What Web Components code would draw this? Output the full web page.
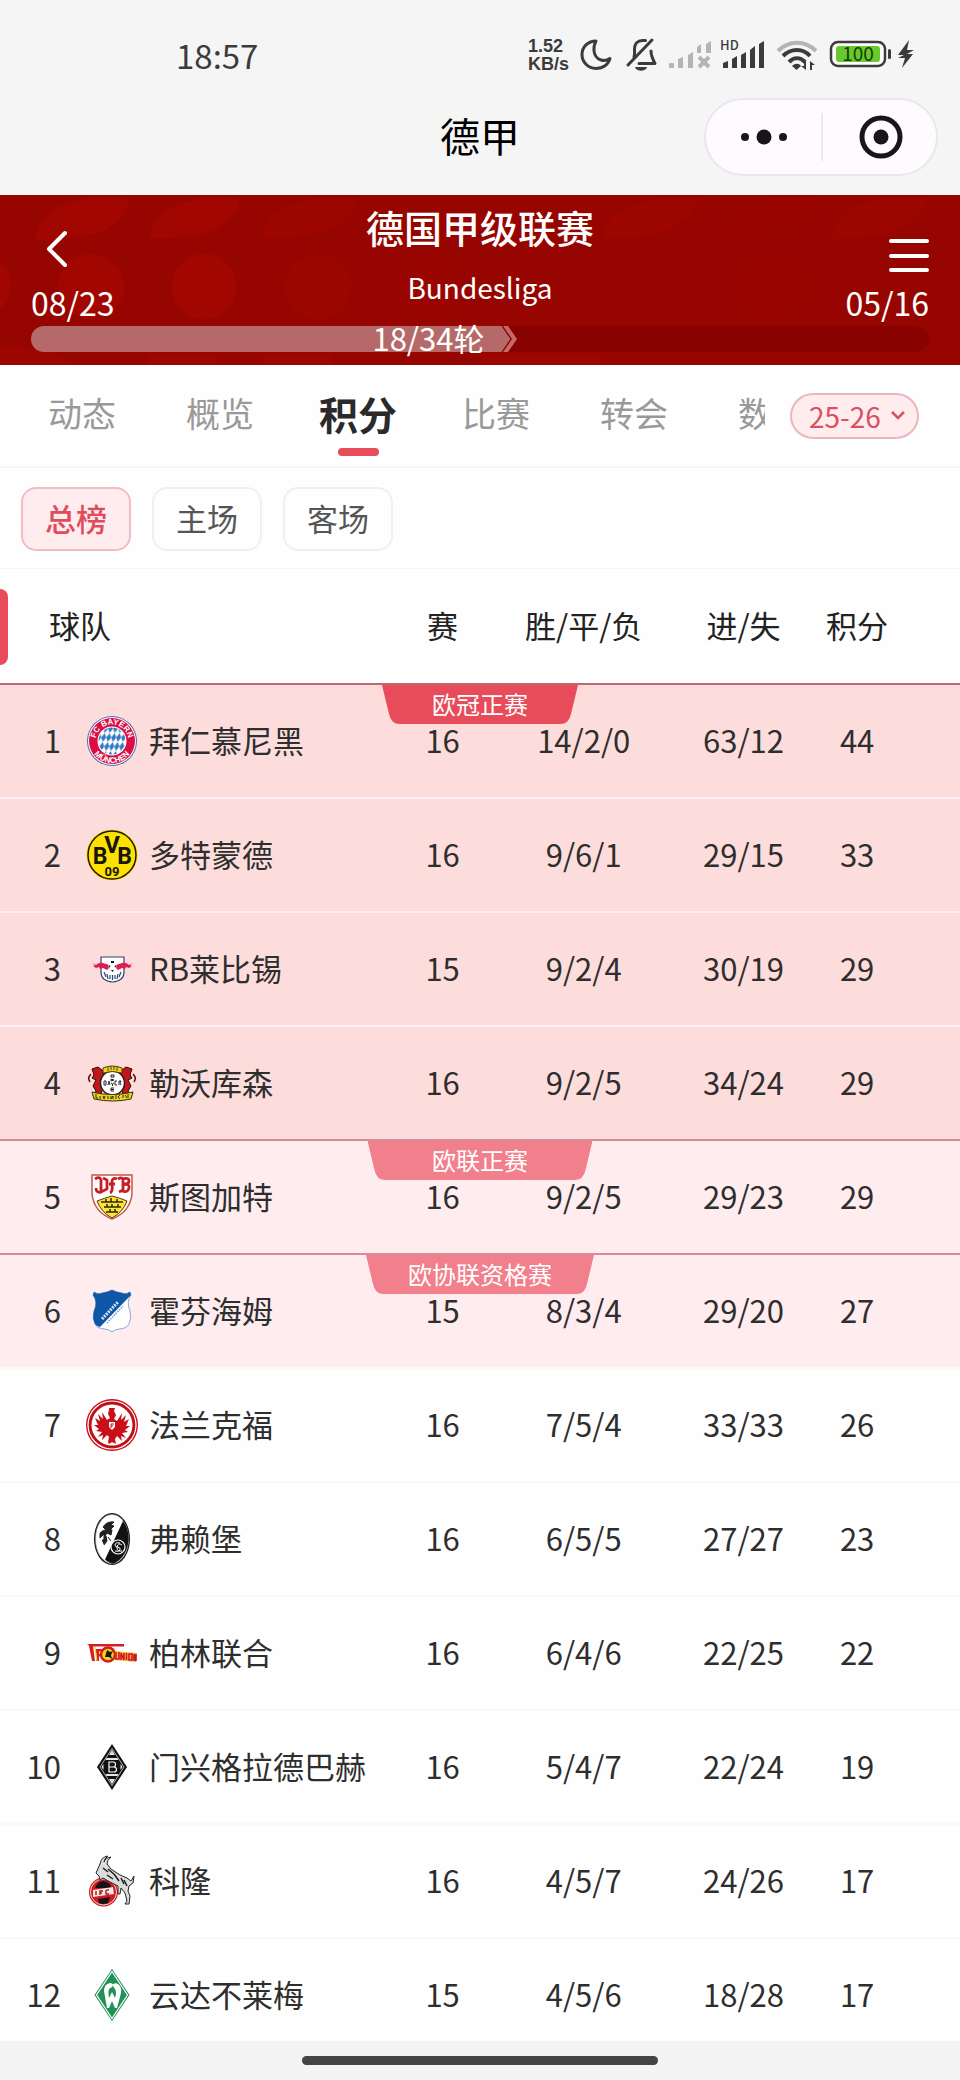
<!DOCTYPE html>
<html lang="zh-CN">
<head>
<meta charset="utf-8">
<meta name="viewport" content="width=device-width, initial-scale=1">
<title>德甲</title>
<style>
    body {
        margin: 0;
        background: #fefefe;
        color: #2e2e2e;
        font-family: 'Noto Sans CJK SC', 'Noto Sans', sans-serif;
    }
</style>
</head>
<body>

<app-shell>
    <status-bar slot="top" time="18:57"></status-bar>
    <nav-bar slot="top">德甲</nav-bar>
    <league-header slot="top" start="08/23" end="05/16" round="18" total="34">
        <span slot="name">德国甲级联赛</span>
        <span slot="latin">Bundesliga</span>
    </league-header>
    <league-tabs slot="top" active="积分"></league-tabs>
    <table-filter slot="top" active="总榜"></table-filter>
    <standings-table></standings-table>
    <home-indicator slot="bottom"></home-indicator>
</app-shell>

<script>
class AppShell extends HTMLElement {

    constructor() {
        super();
        this.shadow = this.attachShadow({ mode: 'open' });
    }

    connectedCallback() {
        this.shadow.innerHTML =
        `
        <style>
            :host {
                display: flex;
                flex-direction: column;
                height: 100vh;
            }
            main {
                flex: 1;
                min-height: 0;
                overflow: hidden;
            }
        </style>

        <slot name="top"></slot>
        <main><slot></slot></main>
        <slot name="bottom"></slot>
        `;
    }
}

class StatusBar extends HTMLElement {

    constructor() {
        super();
        this.shadow = this.attachShadow({ mode: 'open' });
    }

    connectedCallback() {
        this.shadow.innerHTML =
        `
        <style>
            :host {
                display: flex;
                justify-content: space-between;
                align-items: center;
                padding: 35px 40px 23px 176px;
                background: #f5f5f5;
                color: #3b3b3b;
            }
            time {
                font-size: 33px;
                line-height: 40px;
            }
            .icons {
                display: flex;
                align-items: center;
            }
            .speed {
                display: flex;
                flex-direction: column;
                width: 46px;
                font-family: 'Liberation Sans', sans-serif;
                font-size: 18px;
                font-weight: 700;
                line-height: 18px;
            }
            svg {
                display: block;
                height: 40px;
                fill: #3b3b3b;
            }
            .line {
                fill: none;
                stroke: #3b3b3b;
                stroke-width: 3;
                stroke-linecap: round;
                stroke-linejoin: round;
            }
            .faded { fill: #b4b4b4; }
        </style>

        <time>${this.getAttribute('time')}</time>
        <div class="icons">
            <div class="speed"><span>1.52</span><span>KB/s</span></div>
            <svg viewBox="574 36 45 40" width="45">
                <path class="line" d="M596 42c-8 0-14 6-14 13.500s6 14 14 14c7 0 12.500-4 14-10-3 2-6 2.500-9 1.500-7-2-9-11-5-19z"/>
            </svg>
            <svg viewBox="619 36 44 40" width="44">
                <path class="line" d="M634 58c1-3 .5-6 .5-8 0-5 3-8.500 8-8.500h3M651 52c0 5 1 7 4 12.500h-16M628 66l24-25"/>
                <path d="M635 68h12c-1 5-11 5-12 0z"/>
            </svg>
            <svg viewBox="663 36 53 40" width="53" class="faded">
                <rect x="669" y="64" width="5" height="5" rx="1"/>
                <path d="M678 60l5-2v11h-5zM688 56l5-3v16h-5zM697 48l4-3v9h-4zM706 45l5-3v12h-5z"/>
                <path d="M699 58l10 10M709 58l-10 10" fill="none" stroke="#b4b4b4" stroke-width="4"/>
            </svg>
            <svg viewBox="716 36 54 40" width="54">
                <text x="720" y="51" font-size="13" font-weight="500">HD</text>
                <path d="M723 64l5-2v7h-5zM732 60l5-3v12h-5zM741 56l5-3v16h-5zM750 51l5-4v22h-5zM759 45l5-3v27h-5z"/>
            </svg>
            <svg viewBox="770 36 53 40" width="53">
                <path d="M778 52c11-11 27-11 38 0" fill="none" stroke="#b4b4b4" stroke-width="4"/>
                <path d="M783 57c8-8 20-8 27 0M789 63c5-5 11-5 16 0" fill="none" stroke="#3b3b3b" stroke-width="4"/>
                <path d="M792 67c3-3 7-3 9 0l-4.500 4zM806 62v9l-5-4h3v-5zM810 71v-9l5 4h-3v5z"/>
            </svg>
            <svg viewBox="823 36 71 40" width="71">
                <rect x="831" y="43" width="54" height="24" rx="7" fill="#fff" stroke="#3b3b3b" stroke-width="2.500"/>
                <rect x="836" y="47" width="44" height="16" rx="3" fill="#68c92c"/>
                <text x="858" y="62" font-size="19" text-anchor="middle" fill="#173d05">100</text>
                <rect x="888" y="50" width="3" height="10" rx="1.500"/>
            </svg>
            <svg viewBox="894 36 26 40" width="26">
                <path d="M909 41l-11 15h6l-6 3 7 0-3 10 11-14h-6l7-4h-7z"/>
            </svg>
        </div>
        `;
    }
}

class NavBar extends HTMLElement {

    constructor() {
        super();
        this.shadow = this.attachShadow({ mode: 'open' });
    }

    connectedCallback() {
        this.shadow.innerHTML =
        `
        <style>
            :host {
                display: grid;
                grid-template-columns: 1fr auto 1fr;
                align-items: center;
                padding: 0 22px 19px;
                background: #f5f5f5;
                color: #000;
            }
            h1 {
                grid-column: 2;
                margin: 0 0 4px;
                font-size: 40px;
                font-weight: 400;
                line-height: 48px;
            }
            .capsule {
                display: flex;
                align-items: center;
                justify-self: end;
                border: 2px solid #ebe6ed;
                border-radius: 40px;
                background: #fefbff;
            }
            button {
                width: 115px;
                height: 74px;
                padding: 0;
                border: 0;
                background: none;
            }
            button + button { border-image: linear-gradient(#0000 18%, #ece8ee 18% 82%, #0000 82%) 1; border-left: 2px solid; }
            svg {
                display: inline-block;
                vertical-align: middle;
                fill: #19161a;
            }
        </style>

        <h1><slot></slot></h1>
        <div class="capsule">
            <button type="button" aria-label="更多">
                <svg width="48" height="46" viewBox="0 0 48 46">
                    <circle cx="5" cy="23" r="4"/><circle cx="24" cy="23" r="7.500"/><circle cx="43" cy="23" r="4"/>
                </svg>
            </button>
            <button type="button" aria-label="关闭">
                <svg width="46" height="46" viewBox="0 0 46 46">
                    <circle cx="24" cy="23" r="19" fill="none" stroke="#19161a" stroke-width="5"/>
                    <circle cx="24" cy="23" r="7.500"/>
                </svg>
            </button>
        </div>
        `;
    }
}

class LeagueHeader extends HTMLElement {

    constructor() {
        super();
        this.shadow = this.attachShadow({ mode: 'open' });
    }

    connectedCallback() {
        let round = this.getAttribute('round');
        let total = this.getAttribute('total');

        this.shadow.innerHTML =
        `
        <style>
            :host {
                display: block;
                position: relative;
                padding: 7px 31px 13px;
                background: #970500;
                color: #fff;
            }
            .pattern {
                position: absolute;
                inset: 0;
                width: 100%;
                height: 100%;
            }
            .top {
                position: relative;
                display: grid;
                grid-template-columns: 1fr auto 1fr;
            }
            .side {
                display: flex;
                flex-direction: column;
                justify-content: space-between;
                align-items: flex-start;
                padding-top: 28px;
                font-size: 32px;
                line-height: 48px;
            }
            .side.right { align-items: flex-end; }
            .title { text-align: center; }
            h2 {
                margin: 0;
                font-size: 38px;
                font-weight: 500;
                line-height: 50px;
            }
            p {
                margin: 15px 0 0;
                font-size: 28px;
                line-height: 40px;
            }
            button {
                padding: 0;
                border: 0;
                background: none;
            }
            svg { display: block; }
            .back { margin-left: 12px; }
            .track {
                position: relative;
                display: flex;
                height: 26px;
                border-radius: 13px;
                background: rgba(90, 0, 0, .25);
            }
            .fill {
                width: calc(100% * ${round} / ${total} + 4px);
                padding-right: 26px;
                box-sizing: border-box;
                border-radius: 13px 0 0 13px;
                background: rgba(230, 220, 220, .48);
                clip-path: polygon(0 -10px, calc(100% - 9px) -10px, calc(100% - 9px) 0, 100% 50%, calc(100% - 9px) 100%, calc(100% - 9px) 36px, 0 36px);
                font-size: 31px;
                line-height: 24px;
                text-align: right;
            }
            .arrow { margin-left: -7px; }
        </style>

        <svg class="pattern" viewBox="0 0 960 171" preserveAspectRatio="none" fill="#a20600">
            <path d="M36 46c0-24 22-38 50-42h42c0 18-18 36-50 38z"/>
            <path d="M150 44c0-24 22-34 48-40h42c-4 20-22 34-50 38z"/>
            <path d="M262 44c0-24 22-34 50-40h46c-6 18-22 30-50 38z" opacity=".5"/>
            <path d="M604 44c0-24 22-34 50-40h46c-6 18-22 30-50 38z" opacity=".5"/>
            <path d="M720 44c0-24 22-34 50-40h46c-6 18-22 30-50 38z" opacity=".3"/>
            <path d="M832 44c0-24 22-34 50-40h46c-6 18-22 30-50 38z" opacity=".5"/>
            <circle cx="-22" cy="90" r="33"/>
            <circle cx="91" cy="92" r="33"/>
            <circle cx="204" cy="92" r="33"/>
            <circle cx="318" cy="92" r="33" opacity=".6"/>
            <circle cx="430" cy="92" r="33" opacity=".3"/>
            <circle cx="660" cy="92" r="33" opacity=".2"/>
            <circle cx="772" cy="92" r="33" opacity=".3"/>
            <path d="M0 152q50 0 74 19H0zM148 160h70v11h-70zM262 160h70v11h-70zM480 160h120v11h-120z" opacity=".6"/>
        </svg>
        <div class="top">
            <div class="side">
                <button class="back" type="button" aria-label="返回">
                    <svg width="26" height="38" viewBox="0 0 26 38">
                        <path d="M22 3L6 19l16 16" fill="none" stroke="#fff" stroke-width="4" stroke-linecap="round" stroke-linejoin="round"/>
                    </svg>
                </button>
                <span>${this.getAttribute('start')}</span>
            </div>
            <div class="title">
                <h2><slot name="name"></slot></h2>
                <p><slot name="latin"></slot></p>
            </div>
            <div class="side right">
                <button type="button" aria-label="菜单">
                    <svg width="40" height="48" viewBox="0 0 40 48">
                        <path d="M2 11h36M2 26h36M2 40h36" stroke="#fff" stroke-width="4" stroke-linecap="round"/>
                    </svg>
                </button>
                <span>${this.getAttribute('end')}</span>
            </div>
        </div>
        <div class="track">
            <div class="fill">${round}/${total}轮</div>
            <svg class="arrow" width="14" height="26" viewBox="0 0 14 26">
                <path d="M0 0h5l9 13-9 13H0l9-13z" fill="#c66a68"/>
            </svg>
        </div>
        `;
    }
}

class LeagueTabs extends HTMLElement {

    constructor() {
        super();
        this.shadow = this.attachShadow({ mode: 'open' });
        this.tabs = ['动态', '概览', '积分', '比赛', '转会', '数据'];
    }

    connectedCallback() {
        let active = this.getAttribute('active');

        this.shadow.innerHTML =
        `
        <style>
            :host {
                display: flex;
                align-items: center;
                padding-right: 41px;
                border-bottom: 2px solid #f6f6f6;
            }
            nav {
                flex: 1;
                display: flex;
                min-width: 0;
                margin: 0 25px 0 13px;
                overflow: hidden;
            }
            nav button {
                flex: 0 0 138px;
                height: 101px;
                padding: 8px 0 0;
                border: 0;
                background: none;
                color: #999;
                font: 34px/80px 'Noto Sans CJK SC', sans-serif;
            }
            nav button::after {
                content: '';
                display: block;
                width: 41px;
                height: 8px;
                margin: -5px auto 18px;
                border-radius: 4px;
            }
            nav button.active {
                color: #2a2a2a;
                font-size: 39px;
                font-weight: 700;
            }
            nav button.active::after { background: #e84b5a; }
            .season {
                display: grid;
                align-items: center;
            }
            .season > * { grid-area: 1 / 1; }
            select {
                appearance: none;
                width: 129px;
                height: 46px;
                padding: 0 0 0 17px;
                border: 2px solid #e6b9c0;
                border-radius: 23px;
                background: #ffecee;
                color: #d9505f;
                font: 28px 'Noto Sans CJK SC', sans-serif;
            }
            svg {
                justify-self: end;
                margin-right: 13px;
                pointer-events: none;
            }
        </style>

        <nav>
            ${this.tabs.map(tab => `<button type="button" class="${tab === active ? 'active' : ''}">${tab}</button>`).join('')}
        </nav>
        <label class="season">
            <select aria-label="赛季">
                <option>25-26</option>
            </select>
            <svg width="16" height="12" viewBox="0 0 16 12">
                <path d="M2 2l6 6 6-6" fill="none" stroke="#d9505f" stroke-width="2.500"/>
            </svg>
        </label>
        `;
    }
}

class TableFilter extends HTMLElement {

    constructor() {
        super();
        this.shadow = this.attachShadow({ mode: 'open' });
    }

    connectedCallback() {
        this.render();

        this.shadow.addEventListener('click', (event => {
            let button = event.target.closest('button');

            if (button) {
                this.setAttribute('active', button.textContent);
                this.render();
            }
        }));
    }

    render() {
        let active = this.getAttribute('active');

        this.shadow.innerHTML =
        `
        <style>
            :host {
                display: flex;
                gap: 21px;
                padding: 19px 21px 17px;
                border-bottom: 1px solid #f6f6f6;
            }
            button {
                width: 110px;
                height: 64px;
                padding: 0 0 2px;
                border: 2px solid #f0f0f0;
                border-radius: 15px;
                background: none;
                color: #555;
                font: 31px/56px 'Noto Sans CJK SC', sans-serif;
            }
            button.active {
                border-color: #f2bcc4;
                background: #ffecee;
                color: #e04c5c;
                font-weight: 500;
            }
        </style>

        ${['总榜', '主场', '客场'].map(name => `<button type="button" class="${name === active ? 'active' : ''}">${name}</button>`).join('')}
        `;
    }
}

class ZoneFlag extends HTMLElement {

    constructor() {
        super();
        this.shadow = this.attachShadow({ mode: 'open' });
    }

    connectedCallback() {
        let width = Number(this.getAttribute('width'));

        this.shadow.innerHTML =
        `
        <style>
            :host {
                display: grid;
                width: ${width}px;
                color: #fff;
                font-size: 24px;
                line-height: 38px;
                text-align: center;
            }
            svg, span { grid-area: 1 / 1; }
        </style>

        <svg width="${width}" height="39" viewBox="0 0 ${width} 39">
            <path d="M0 0H${width}l-7 29q-2 10-11 10H18q-9 0-11-10z" fill="${this.getAttribute('color')}"/>
        </svg>
        <span><slot></slot></span>
        `;
    }
}

const CRESTS = {
    bayern: `
        <defs>
            <pattern id="rauten" width="5" height="9" patternUnits="userSpaceOnUse" patternTransform="skewX(-12)">
                <path d="M2.500 0L5 4.500 2.500 9 0 4.500z" fill="#2f7ac6"/>
            </pattern>
            <path id="over" d="M9.500 26a16.500 16.500 0 0 1 33 0"/>
            <path id="under" d="M4 26a22 22 0 0 0 44 0"/>
        </defs>
        <circle cx="26" cy="26" r="25" fill="#4b6db8"/>
        <circle cx="26" cy="26" r="24" fill="#fff"/>
        <circle cx="26" cy="26" r="23" fill="#dc0d45"/>
        <circle cx="26" cy="26" r="14.500" fill="#fff"/>
        <circle cx="26" cy="26" r="13.500" fill="url(#rauten)"/>
        <g fill="#fff" font-family="Liberation Sans" font-size="8" font-weight="700" text-anchor="middle">
            <text><textPath href="#over" startOffset="50%">FC BAYERN</textPath></text>
            <text><textPath href="#under" startOffset="50%">MÜNCHEN</textPath></text>
        </g>`,
    dortmund: `
        <circle cx="26" cy="26" r="25.500" fill="#fde100"/>
        <circle cx="26" cy="26" r="24" fill="none" stroke="#1d1a08" stroke-width="1.500"/>
        <g fill="#17140a" font-family="Roboto" font-weight="700" text-anchor="middle">
            <text x="14" y="35" font-size="23">B</text>
            <text x="26" y="24" font-size="24">V</text>
            <text x="38.500" y="35" font-size="23">B</text>
            <text x="26" y="47" font-size="13">09</text>
        </g>`,
    leipzig: `
        <path d="M15 14h23v15q0 9-11.500 10Q15 38 15 29z" fill="#fff" stroke="#34406e" stroke-width="1.200"/>
        <path d="M6 20l4 2q3-3 7-2l6 2 1 2-3 3-4-2-3 1-1-2-3 1-3-2 2-.5zM47 20l-4 2q-3-3-7-2l-6 2-1 2 3 3 4-2 3 1 1-2 3 1 3-2-2-.5z" fill="#dd1c50"/>
        <circle cx="26.500" cy="23" r="4" fill="#fff"/>
        <path d="M25 18h3v2h-3zM22.500 22l2 1-1 2zM30.500 22l-2 1 1 2zM25 27h3l-1.500 2z" fill="#171b33"/>
        <path d="M18 29l2 5M21 31l1 5M24 32v4M26.500 32v5M29 32v4M32 31l-1 5M35 29l-2 5" stroke="#34406e" stroke-width="1.200"/>`,
    leverkusen: `
        <path d="M6 12l6-2 4 3 2 5-3 5 3 5-3 9-8 2 3-5-3-5 3-6-4-2 2-3zM46 12l-6-2-4 3-2 5 3 5-3 5 3 9 8 2-3-5 3-5-3-6 4-2-2-3z" fill="#c3151c" stroke="#31090b"/>
        <path d="M5 17q-4 4-1 8M47 17q4 4 1 8" fill="none" stroke="#5b1010" stroke-width="1.500"/>
        <circle cx="26.500" cy="26" r="12" fill="#fff" stroke="#24201c" stroke-width="1.500"/>
        <path d="M17 11q9-4 19 0v5q-10-3-19 0z" fill="#f2d227" stroke="#4f3d0b"/>
        <path d="M22 10v4M25 9v4M28 9v4M31 10v4" stroke="#5b470e"/>
        <path d="M18 24v4M18 24h2v4h-2M22 28l1-4 1 4M29 24v4M29 24h2M29 28h2M33 24v4M33 24h2l-1 2 1 2M25 18h3v2h-3zM25 22l3 1-3 1zM25 26l1.500 1 1.500-1M26.500 27v2M28 31h-3v3h3M25 32.500h3" fill="none" stroke="#252525"/>
        <path d="M6 35q20 5 41 0l-2 7q-18 4-37 0z" fill="#ecd128" stroke="#35310b"/>
        <path d="M10 37v4h2M14 39v3M17 39l1 3 1-3M22 39v3M25 39v3l2-3v3M30 38v4M32 40l2-2M32 40l2 2M37 38v3M39 38l2 3M42 37v4" fill="none" stroke="#37320b"/>`,
    stuttgart: `
        <path d="M6 4h40v19q-2 18-20 25Q8 41 6 23z" fill="#fff" stroke="#bd5a45" stroke-width="1.500"/>
        <path d="M11 30q8-3 15-5 8 2 15 5-4 11-15 17-11-6-15-17z" fill="#fde533" stroke="#5a2e10"/>
        <path d="M9 8q5-3 6 1v12l6-3V9l-4-2M15 21q-5 1-5-4M24 22q3-2 2-8V10q1-4 5-2M23 13h6M32 8q5-3 5 2v9l-4 2M36 8q7-2 7 2 0 3-5 3 6 0 5 4-1 5-7 3" fill="none" stroke="#c91d24" stroke-width="2.800"/>
        <path d="M15 31h22M18 36h17M20 41h12M20 28v3M25 27v4M31 28v3M21 33v3M26 33v3M32 33v3M24 38v3M29 38v3" stroke="#2e250b" stroke-width="1.500"/>`,
    hoffenheim: `
        <path d="M8 7q4 3 8 1 6-1 10-3 4 2 10 3 4 2 8-1l1 3q-5 7-1 16 2 7-1 13-3 5-10 5-5 1-7 3-2-2-7-3-7 0-10-5-3-6-1-13 4-9-1-16z" fill="#fff" stroke="#8aa9ca"/>
        <path d="M8 7q4 3 8 1 6-1 10-3 4 2 10 3 4 2 8-1l1 3L14 42q-4-1-5-3-3-6-1-13 4-9-1-16z" fill="#0d57a6"/>
        <path d="M16 34l16-17" stroke="#d5e3f1" stroke-width="3" stroke-dasharray="2 1"/>
        <path d="M21 38l16-17" stroke="#7d9fc5" stroke-width="1.500" stroke-dasharray="1.500 1"/>`,
    frankfurt: `
        <circle cx="26" cy="26" r="26" fill="#c30f18"/>
        <circle cx="26" cy="26" r="24" fill="none" stroke="#fff" stroke-width="1.200"/>
        <circle cx="26" cy="26" r="20.500" fill="#fff"/>
        <path d="M23 9h6l-1 3 2 4-2 4 3 2 5-8-1 7 5-5-2 7 5-3-3 7 4 0-5 4 3 2-6 1 4 5-5-2 1 5-5-5-2 3 1 5-4-2-3 2-1-2 1-5-2-2-5 5 1-5-5 2 4-5-6-1 3-2-5-4h4l-3-7 5 3-2-7 5 5-1-7 5 8 3-2-2-4 1-4z" fill="#c90f19"/>
        <path d="M23 23h6v5l-3 3-3-3z" fill="#fff"/>
        <path d="M25 29v-4h3M25 27h2" fill="none" stroke="#c90f19"/>`,
    freiburg: `
        <ellipse cx="26" cy="26" rx="18" ry="26" fill="#171717"/>
        <ellipse cx="26" cy="26" rx="16.500" ry="24.500" fill="#fff" stroke="#999" stroke-width=".6"/>
        <path d="M37 8Q43 16 42.500 27 41 44 28 50.500q-5 0-9-4z" fill="#111"/>
        <path d="M17 14q4-6 11-5l-3 3 3 1-4 4-5-1zM14 20q5-5 12-3l-1 5-4-2-3 5 0-4-4 4zM16 28l4-5 1 5-3 4M22 24l3 4" fill="#222" stroke="#222"/>
        <circle cx="32" cy="34" r="7" fill="#111" stroke="#fff" stroke-width="1.200"/>
        <path d="M34 30q-5-1-5 2 0 2 3 2 3 1 2 3-1 2-5 1M36 32q-4-3-5 2 0 5 5 4" fill="none" stroke="#fff"/>`,
    union: `
        <path d="M1 17h37v2.500H4z" fill="#d6201f"/>
        <path d="M3 19l3 15h3L7 19zM10 22h8v2.500h-5V27h4v2.500h-4V34h-3z" fill="#d6201f"/>
        <path d="M9 20l2 14M13 26h4" stroke="#f4cf1b" stroke-width="1.200"/>
        <circle cx="22" cy="27.500" r="7" fill="#f4d322" stroke="#cf1c1c" stroke-width="2.500"/>
        <path d="M19 30l2-7 3 2 3-1-2 4 1 4-3-2z" fill="#1c190b"/>
        <path d="M29 24l22 2-1 9-21-2z" fill="#f3c22a"/>
        <path d="M30 25v7h3v-7M35 33v-7l3 7v-7M40.500 26v7M43 27h3v6h-3zM48 34v-7l2 7v-7" fill="none" stroke="#cf1233" stroke-width="1.600"/>`,
    gladbach: `
        <path d="M26 3l15 23-15 23L11 26z" fill="#111"/>
        <path d="M26 7.500l12 18.500-12 18.500L14 26z" fill="none" stroke="#ddd" stroke-width=".8"/>
        <path d="M23 14h6l-3-5zM20.500 17h11l1 2h-13zM23 38h6l-3 5zM20.500 35h11l1-2h-13zM15.500 26l2-3v6zM36.500 26l-2-3v6z" fill="#e7e7e7"/>
        <path d="M23 21h4.500q2 0 2 2.500T27.500 26H23zM23 26h5q2.500 0 2.500 2.500T28 31h-5z" fill="none" stroke="#fff" stroke-width="1.200"/>`,
    koeln: `
        <circle cx="17.500" cy="37" r="14.500" fill="#cf1b20"/>
        <circle cx="17.500" cy="37" r="13" fill="none" stroke="#fff" stroke-width=".8"/>
        <path d="M11 29q6-6 13 0l1 4H9zM12 44l12-2-2 6q-5 2-9 0z" fill="#171313"/>
        <path d="M7 35l20-3 1 7-21 3z" fill="#f6e6e6"/>
        <path d="M10 36v4M14 40v-4h3M14 38h2M23 35q-4-1-3 4h3" fill="none" stroke="#a81519" stroke-width="1.400"/>
        <path d="M14 9q1-7 8-8-4 3-4 6 1-4 7-5-4 3-4 7l4 5 9 6 7 3 4 3 3-5-1 7-4 3-1 5 2 5-1 8h-4l2-3-2-8-4-5-1 6h-2v-8l-8-4-7-4-3 2-1-4-3-3z" fill="#dcdcdc" stroke="#222"/>
        <path d="M17 13l5 4M22 14l7 6M21 20l6 4M28 19l5 7M35 23l3 6M38 25l3 6" stroke="#1d1d1d" stroke-width="1.500"/>`,
    bremen: `
        <path d="M26 0l17.500 26L26 52 8.500 26z" fill="#219257"/>
        <path d="M26 2.500L41.500 26 26 49.500 10.500 26z" fill="none" stroke="#fff" stroke-width="1.200"/>
        <path d="M18 22q0-7 6-8 4 0 2 4l-3 2q-1 3 0 9l3-6 3 6q2-6 0-9l-3-4q3-3 6-1 4 3 3 9l-4 15h-2l-3-7-3 7h-2z" fill="#fff"/>`
};

class ClubCrest extends HTMLElement {

    constructor() {
        super();
        this.shadow = this.attachShadow({ mode: 'open' });
    }

    connectedCallback() {
        this.shadow.innerHTML =
        `
        <style>
            :host { display: block; }
            svg {
                display: block;
                width: 52px;
                height: 52px;
            }
        </style>

        <svg viewBox="0 0 52 52" aria-hidden="true">${CRESTS[this.getAttribute('club')]}</svg>
        `;
    }
}

class StandingsTable extends HTMLElement {

    constructor() {
        super();
        this.shadow = this.attachShadow({ mode: 'open' });
        this.teams = [
            { club: 'bayern', name: '拜仁慕尼黑', played: 16, record: '14/2/0', goals: '63/12', points: 44, zone: 'ucl' },
            { club: 'dortmund', name: '多特蒙德', played: 16, record: '9/6/1', goals: '29/15', points: 33, zone: 'ucl' },
            { club: 'leipzig', name: 'RB莱比锡', played: 15, record: '9/2/4', goals: '30/19', points: 29, zone: 'ucl' },
            { club: 'leverkusen', name: '勒沃库森', played: 16, record: '9/2/5', goals: '34/24', points: 29, zone: 'ucl' },
            { club: 'stuttgart', name: '斯图加特', played: 16, record: '9/2/5', goals: '29/23', points: 29, zone: 'uel' },
            { club: 'hoffenheim', name: '霍芬海姆', played: 15, record: '8/3/4', goals: '29/20', points: 27, zone: 'uecl' },
            { club: 'frankfurt', name: '法兰克福', played: 16, record: '7/5/4', goals: '33/33', points: 26 },
            { club: 'freiburg', name: '弗赖堡', played: 16, record: '6/5/5', goals: '27/27', points: 23 },
            { club: 'union', name: '柏林联合', played: 16, record: '6/4/6', goals: '22/25', points: 22 },
            { club: 'gladbach', name: '门兴格拉德巴赫', played: 16, record: '5/4/7', goals: '22/24', points: 19 },
            { club: 'koeln', name: '科隆', played: 16, record: '4/5/7', goals: '24/26', points: 17 },
            { club: 'bremen', name: '云达不莱梅', played: 15, record: '4/5/6', goals: '18/28', points: 17 }
        ];
        this.zones = {
            ucl: { label: '欧冠正赛', width: 196, color: '#e84b5a' },
            uel: { label: '欧联正赛', width: 225, color: '#f1808c' },
            uecl: { label: '欧协联资格赛', width: 228, color: '#f1808c' }
        };
    }

    connectedCallback() {
        this.render();
    }

    // The flag hangs from the first row of each zone
    row(team, index) {
        let previous = this.teams[index - 1];
        let first = team.zone && (!previous || previous.zone !== team.zone);
        let zone = this.zones[team.zone];
        let flag = first ? `<zone-flag width="${zone.width}" color="${zone.color}">${zone.label}</zone-flag>` : '';

        return `
            <tr class="${team.zone || ''} ${first ? 'first' : ''}">
                <td class="rank">${index + 1}</td>
                <td class="crest"><club-crest club="${team.club}"></club-crest></td>
                <td class="name">${team.name}${flag}</td>
                <td>${team.played}</td>
                <td>${team.record}</td>
                <td>${team.goals}</td>
                <td class="points">${team.points}</td>
            </tr>
        `;
    }

    render() {
        this.shadow.innerHTML =
        `
        <style>
            :host { display: block; }
            table {
                width: 100%;
                table-layout: fixed;
                border-collapse: separate;
                border-spacing: 0;
                font-size: 31px;
                line-height: 44px;
            }
            tr { position: relative; }
            th, td {
                box-sizing: border-box;
                height: 114px;
                padding: 0 0 3px;
                font-weight: 400;
                text-align: center;
                white-space: nowrap;
            }
            td { border-top: 2px solid #f9f9f9; }
            th { color: #222; }
            .team {
                padding-left: 49px;
                text-align: left;
            }
            .team::before {
                content: '';
                position: absolute;
                left: 0;
                top: 20px;
                width: 8px;
                height: 76px;
                border-radius: 0 8px 8px 0;
                background: #e84b5a;
            }
            .rank { text-align: right; }
            .crest { padding: 0 0 0 25px; }
            .name { text-align: left; }
            .points { padding-right: 58px; }
            .ucl td {
                border-color: #fdeef4;
                background: #fddddc;
            }
            .uel td, .uecl td { background: #feecee; }
            .first td { border-color: #d68b9c; }
            .ucl.first td { border-color: #bf6773; }
            zone-flag {
                position: absolute;
                top: 2px;
                left: 50%;
                transform: translateX(-50%);
            }
        </style>

        <table>
            <colgroup>
                <col style="width: 61px">
                <col style="width: 88px">
                <col>
                <col style="width: 10.4%">
                <col style="width: 19%">
                <col style="width: 14.3%">
                <col style="width: 15.4%">
            </colgroup>
            <thead>
                <tr>
                    <th class="team" colspan="3">球队</th>
                    <th>赛</th>
                    <th>胜/平/负</th>
                    <th>进/失</th>
                    <th class="points">积分</th>
                </tr>
            </thead>
            <tbody>
                ${this.teams.map((team, index) => this.row(team, index)).join('')}
            </tbody>
        </table>
        `;
    }
}

class HomeIndicator extends HTMLElement {

    constructor() {
        super();
        this.shadow = this.attachShadow({ mode: 'open' });
    }

    connectedCallback() {
        this.shadow.innerHTML =
        `
        <style>
            :host {
                display: block;
                padding: 15px 0;
                background: #f4f4f4;
            }
            div {
                width: 37%;
                height: 9px;
                margin: 0 auto;
                border-radius: 5px;
                background: #444;
            }
        </style>

        <div></div>
        `;
    }
}

customElements.define('app-shell', AppShell);
customElements.define('status-bar', StatusBar);
customElements.define('nav-bar', NavBar);
customElements.define('league-header', LeagueHeader);
customElements.define('league-tabs', LeagueTabs);
customElements.define('table-filter', TableFilter);
customElements.define('zone-flag', ZoneFlag);
customElements.define('club-crest', ClubCrest);
customElements.define('standings-table', StandingsTable);
customElements.define('home-indicator', HomeIndicator);
</script>
</body>
</html>
